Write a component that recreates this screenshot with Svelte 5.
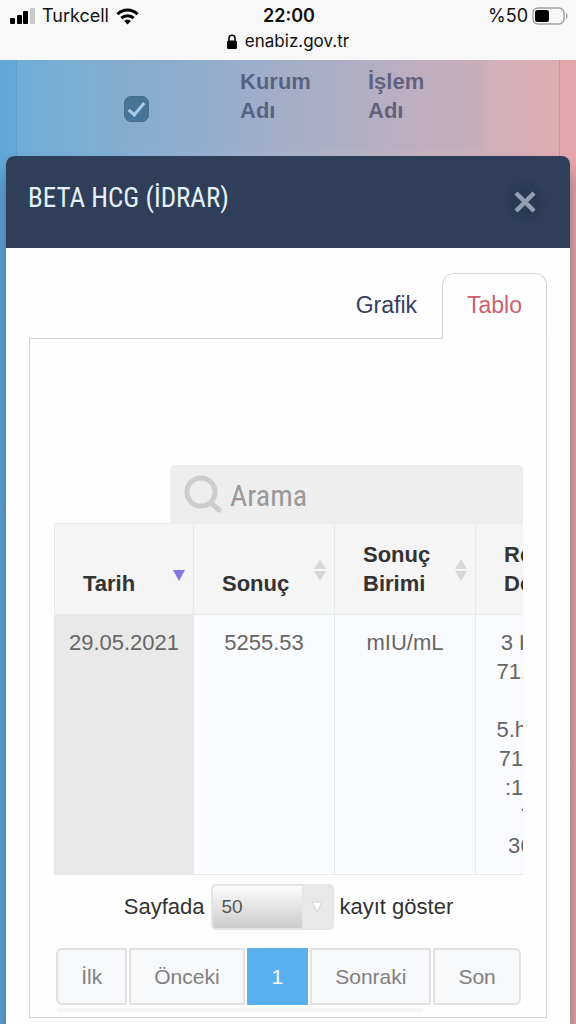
<script lang="ts">
  interface Row {
    date: string;
    result: string;
    unit: string;
    reference: string[];
  }

  const columns = [
    { label: 'Tarih', width: 140 },
    { label: 'Sonuç', width: 141 },
    { label: 'Sonuç Birimi', width: 141 },
    { label: 'Referans Değeri', width: 158 }
  ];

  const rows: Row[] = [
    {
      date: '29.05.2021',
      result: '5255.53',
      unit: 'mIU/mL',
      reference: [
        '3 Hafta:5,8',
        '71,2 4.hafta',
        '',
        '5.hafta: 217',
        '7138-1580.',
        ':158-3179',
        '7.hafta',
        '3697-163'
      ]
    }
  ];

  let open = $state(true);
  let activeTab = $state('Tablo');
  let search = $state('');
  let pageSize = $state('50');
  let sortColumn = $state(0);
  let checked = $state(true);

  const visibleRows = $derived(
    rows.filter((row) => (row.date + row.result + row.unit).toLowerCase().includes(search.toLowerCase()))
  );
</script>

<svelte:head>
  <title>e-Nabız</title>
</svelte:head>

<div class="page">
  <header class="status">
    <div class="status-row">
      <div class="carrier">
        <svg width="25" height="16" viewBox="0 0 25 16" aria-hidden="true">
          <rect x="0" y="10" width="5" height="6" rx="1" />
          <rect x="7" y="7" width="5" height="9" rx="1" />
          <rect x="13" y="3" width="5" height="13" rx="1" />
          <rect x="20" y="0" width="5" height="16" rx="1" fill="#c9c9cb" />
        </svg>
        <span>Turkcell</span>
        <svg width="23" height="17" viewBox="0 0 23 17" fill="none" stroke="#000" stroke-width="3" aria-hidden="true">
          <path d="M1.5 6.2C7.2.6 15.8.6 21.5 6.2" />
          <path d="M5.3 10.2c3.5-3.4 8.9-3.4 12.4 0" />
          <path d="M11.5 16.6l-3.4-3.5c1.9-1.8 4.9-1.8 6.8 0z" fill="#000" stroke="none" />
        </svg>
      </div>
      <strong>22:00</strong>
      <div class="battery">
        <span>%50</span>
        <svg width="36" height="18" viewBox="0 0 36 18" aria-hidden="true">
          <rect x="1" y="1" width="31" height="16" rx="5" fill="none" stroke="#a0a0a2" stroke-width="1.5" />
          <rect x="3" y="3" width="14" height="12" rx="2.5" />
          <path d="M34 6c2 .6 2 5.4 0 6z" fill="#a0a0a2" />
        </svg>
      </div>
    </div>
    <div class="address">
      <svg width="10" height="15" viewBox="0 0 10 15" aria-hidden="true">
        <path d="M2 7V4.2a3 3 0 0 1 6 0V7" fill="none" stroke="#000" stroke-width="1.5" />
        <rect x="0" y="6.5" width="10" height="8.5" rx="1.5" />
      </svg>
      <span>enabiz.gov.tr</span>
    </div>
  </header>

  <div class="behind">
    <div class="behind-card">
      <div class="behind-head">
        <input type="checkbox" aria-label="Tümünü seç" bind:checked />
        <span>Kurum Adı</span>
        <span>İşlem Adı</span>
      </div>
    </div>
  </div>

  {#if open}
    <div class="modal" role="dialog" aria-labelledby="modal-title">
      <div class="modal-header">
        <h1 id="modal-title">BETA HCG (İDRAR)</h1>
        <button class="close" aria-label="Kapat" onclick={() => (open = false)}>
          <svg width="22" height="22" viewBox="0 0 22 22" fill="none" stroke="#94a0b2" stroke-width="4.5" aria-hidden="true">
            <path d="M2 2l18 18M20 2L2 20" />
          </svg>
        </button>
      </div>

      <div class="modal-body">
        <div class="tabs" role="tablist">
          {#each ['Grafik', 'Tablo'] as tab}
            <button role="tab" aria-selected={activeTab === tab} class:active={activeTab === tab} onclick={() => (activeTab = tab)}>
              {tab}
            </button>
          {/each}
        </div>

        <div class="panel" role="tabpanel">
          <label class="search">
            <svg width="38" height="38" viewBox="0 0 38 38" fill="none" stroke="#cdcdcd" aria-hidden="true">
              <circle cx="17" cy="17" r="14" stroke-width="5" />
              <path d="M27 28l8 7" stroke-width="5" stroke-linecap="round" />
            </svg>
            <input type="text" placeholder="Arama" aria-label="Arama" bind:value={search} />
          </label>

          <div class="table-wrap">
            <table>
              <colgroup>
                {#each columns as column}
                  <col style="width: {column.width}px" />
                {/each}
              </colgroup>
              <thead>
                <tr>
                  {#each columns as column, i}
                    <th scope="col">
                      <button onclick={() => (sortColumn = i)}>
                        <span>{column.label}</span>
                        <svg width="12" height="22" viewBox="0 0 12 22" aria-hidden="true">
                          {#if sortColumn === i}
                            <path d="M0 11h12l-6 11z" fill="#7f78e0" />
                          {:else}
                            <path d="M0 10h12L6 0zM0 12h12l-6 10z" fill="#d8d8d8" />
                          {/if}
                        </svg>
                      </button>
                    </th>
                  {/each}
                </tr>
              </thead>
              <tbody>
                {#each visibleRows as row}
                  <tr>
                    <td class="sorted">{row.date}</td>
                    <td>{row.result}</td>
                    <td>{row.unit}</td>
                    <td>
                      {#each row.reference as line}
                        {line}<br />
                      {/each}
                    </td>
                  </tr>
                {/each}
              </tbody>
            </table>
          </div>

          <div class="length">
            <label for="page-size">Sayfada</label>
            <span class="select">
              <select id="page-size" bind:value={pageSize}>
                <option>10</option>
                <option>25</option>
                <option>50</option>
              </select>
              <span class="arrow">
                <svg width="12" height="12" viewBox="0 0 12 12" aria-hidden="true">
                  <path d="M1 1h10L6 11z" fill="#fff" stroke="#d4d4d4" />
                </svg>
              </span>
            </span>
            <span>kayıt göster</span>
          </div>

          <nav class="pages" aria-label="Sayfalar">
            <button>İlk</button>
            <button>Önceki</button>
            <button class="current" aria-current="page">1</button>
            <button>Sonraki</button>
            <button>Son</button>
          </nav>
          <div class="scrollbar"></div>
        </div>
      </div>
    </div>
  {/if}
</div>

<style>
  :global(body) {
    margin: 0;
  }

  .page {
    min-height: 100vh;
    display: flex;
    flex-direction: column;
    overflow: hidden;
    font-family: "Liberation Sans", Arial, sans-serif;
    font-size: 22px;
    line-height: 29px;
    color: #333;
    background: linear-gradient(90deg, #5fa7d7, #9dabcb 45%, #c6adbd 75%, #e6a5ab);
  }

  button,
  input,
  select {
    font: inherit;
    color: inherit;
    margin: 0;
    padding: 0;
    border: 0;
    border-radius: 0;
    background: none;
    box-sizing: border-box;
  }

  button {
    cursor: pointer;
  }

  .status {
    height: 60px;
    background: #f8f8f8;
    color: #111;
    font-family: Inter, sans-serif;
    font-size: 18px;
    line-height: 24px;
    position: relative;
  }

  .status-row {
    display: grid;
    grid-template-columns: 1fr auto 1fr;
    align-items: center;
    padding: 4px 8px 0 10px;
  }

  .carrier,
  .battery,
  .address {
    display: flex;
    align-items: center;
    gap: 7px;
  }

  .battery {
    justify-content: flex-end;
    gap: 4px;
  }

  .status strong {
    font-weight: 600;
  }

  .address {
    justify-content: center;
    gap: 8px;
    padding-top: 1px;
    font-size: 17px;
  }

  .behind {
    height: 96px;
    padding: 0 16px;
  }

  .behind-card {
    height: 96px;
    border: solid rgba(60, 110, 150, 0.25);
    border-width: 0 1px;
    background: rgba(200, 225, 225, 0.12);
    box-sizing: border-box;
  }

  .behind-head {
    display: grid;
    grid-template-columns: 116px 128px 90px;
    margin: 0 72px 0 80px;
    padding: 7px 0 11px 27px;
    align-items: end;
    background: rgba(100, 110, 150, 0.05);
    color: rgba(40, 45, 80, 0.6);
    font-weight: bold;
  }

  .behind-head span {
    width: 80px;
    padding-bottom: 15px;
  }

  .behind-head input {
    appearance: none;
    width: 25px;
    height: 26px;
    margin-bottom: 18px;
    border: 1px solid #426c90;
    border-radius: 7px;
    background: #477597;
    display: grid;
    place-items: center;
  }

  .behind-head input:checked::after {
    content: "";
    width: 6px;
    height: 14px;
    margin-bottom: 4px;
    border: solid #a9cbe3;
    border-width: 0 3px 3px 0;
    transform: rotate(40deg);
  }

  .modal {
    flex: 1;
    margin: 0 6px;
    border-radius: 8px 8px 0 0;
    background: #fefefe;
    box-shadow: 0 16px 18px rgba(20, 30, 50, 0.4);
  }

  .modal-header {
    display: flex;
    justify-content: space-between;
    align-items: center;
    height: 92px;
    box-sizing: border-box;
    padding: 0 22px;
    border-radius: 8px 8px 0 0;
    background: #2f3f59;
  }

  .modal-header h1 {
    margin: 0 0 8px;
    font-family: "Roboto Condensed", "Liberation Sans Narrow", Roboto, sans-serif;
    font-size: 27px;
    font-weight: 400;
    line-height: 36px;
    color: #e4f0fc;
  }

  .close {
    display: grid;
    place-items: center;
    width: 46px;
    height: 46px;
    border-radius: 50%;
    background: radial-gradient(#293a55 40%, #2f3f59 75%);
  }

  .modal-body {
    padding: 25px 23px 5px;
  }

  .tabs {
    display: flex;
    justify-content: flex-end;
    font-size: 23px;
  }

  .tabs button {
    height: 65px;
    padding: 0 24px 1px;
    border: 1px solid transparent;
    border-bottom: 0;
    color: #33415c;
  }

  .tabs button.active {
    position: relative;
    margin-bottom: -1px;
    height: 66px;
    padding-bottom: 2px;
    border-color: #d6d6d6;
    border-radius: 12px 12px 0 0;
    background: #fefefe;
    color: #d06070;
  }

  .panel {
    border: 1px solid #d2d2d2;
    padding: 126px 23px 0 24px;
  }

  .search {
    display: flex;
    align-items: center;
    gap: 8px;
    height: 58px;
    margin-left: 116px;
    padding-left: 14px;
    border-radius: 5px 5px 0 0;
    background: #eee;
  }

  .search input {
    flex: 1;
    min-width: 0;
    height: 58px;
    padding-top: 2px;
    outline: none;
    font-family: "Roboto Condensed", "Liberation Sans Narrow", Roboto, sans-serif;
    font-size: 30px;
    color: #555;
  }

  .search input::placeholder {
    color: #999;
    opacity: 1;
  }

  .table-wrap {
    overflow: hidden;
  }

  table {
    width: 100%;
    min-width: 580px;
    table-layout: fixed;
    border-spacing: 0;
    border-top: 1px solid #ececec;
  }

  th,
  td {
    padding: 0;
    border: solid #e3eaed;
    border-width: 0 1px 1px 0;
  }

  th:first-child,
  td:first-child {
    border-left: 1px solid #e3eaed;
  }

  th {
    background: #f5f5f5;
    vertical-align: bottom;
    font-weight: bold;
  }

  th button {
    display: flex;
    justify-content: space-between;
    align-items: flex-end;
    width: 100%;
    padding: 16px 8px 16px 28px;
    text-align: left;
  }

  th svg {
    flex: none;
    margin-bottom: 17px;
  }

  td {
    padding: 13px 6px 14px;
    background: #fafbfe;
    color: #666;
    text-align: center;
    vertical-align: top;
  }

  td.sorted {
    background: #e9e9e9;
  }

  .length {
    display: flex;
    justify-content: center;
    align-items: center;
    gap: 6px;
    margin-top: 9px;
  }

  .length label,
  .length > span:last-child {
    padding-bottom: 2px;
  }

  .select {
    position: relative;
    width: 123px;
    height: 46px;
  }

  .select select {
    appearance: none;
    width: 100%;
    height: 100%;
    padding: 0 0 2px 9px;
    border: 2px solid #e4e4e4;
    border-radius: 5px;
    background: linear-gradient(#fdfdfd, #cbcbcb);
    font-size: 19px;
    color: #555;
  }

  .arrow {
    position: absolute;
    top: 1px;
    right: 1px;
    bottom: 1px;
    width: 31px;
    display: grid;
    place-items: center;
    border-radius: 0 4px 4px 0;
    background: #e8e8e8;
    pointer-events: none;
  }

  .pages {
    display: flex;
    justify-content: center;
    gap: 2px;
    margin-top: 18px;
    font-size: 21px;
  }

  .pages button {
    height: 57px;
    padding: 0 23px;
    border: 2px solid #e1e1e3;
    background: #f7f8fa;
    color: #808080;
  }

  .pages button:first-child {
    border-radius: 6px 0 0 6px;
  }

  .pages button:last-child {
    border-radius: 0 6px 6px 0;
  }

  .pages .current {
    border-color: #5aafee;
    background: #5aafee;
    color: #fff;
  }

  .scrollbar {
    width: 78%;
    height: 4px;
    margin: 3px 3px 5px;
    background: #f6f6f6;
  }
</style>
